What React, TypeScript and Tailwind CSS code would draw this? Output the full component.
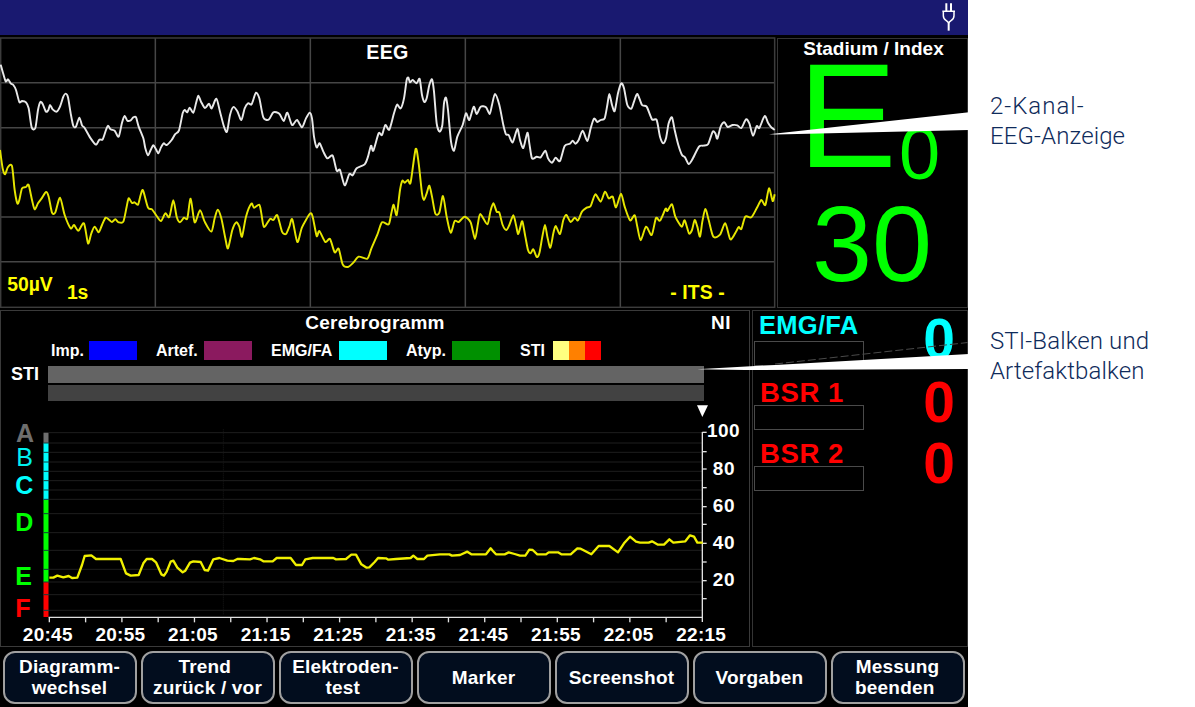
const parse = (dx: number, dy: number, s: string) =>
  s
    .trim()
    .split(/\s+/)
    .map((p) => {
      const [x, y] = p.split(',').map(Number);
      return `${x + dx},${y + dy}`;
    })
    .join(' ');

/* Turns a point list into a smooth curve that passes through every sample. */
const smooth = (list: string) => {
  const p = list.split(' ').map((q) => q.split(',').map(Number));
  const k = 0.13;
  let d = `M${p[0][0]} ${p[0][1]}`;
  for (let i = 0; i < p.length - 1; i++) {
    const a = p[Math.max(0, i - 1)];
    const b = p[i];
    const c = p[i + 1];
    const e = p[Math.min(p.length - 1, i + 2)];
    d += `C${b[0] + (c[0] - a[0]) * k} ${b[1] + (c[1] - a[1]) * k} ${c[0] - (e[0] - b[0]) * k} ${c[1] - (e[1] - b[1]) * k} ${c[0]} ${c[1]}`;
  }
  return d;
};

const channelOne = smooth([
  parse(0, 0, '2,104 8,125 17,154 24,148 32,160 40,165 48,180 58,216 66,213 78,217 86,235 95,292 106,294 114,240 121,216 128,222 138,245 145,240 150,225 158,238 170,245 180,230 190,200 197,191 204,202 212,250 220,288 228,290 238,263 246,286 254,294 272,325 288,344 298,329 308,328 318,300 324,287 332,298 344,302 356,320 366,278 374,258 382,272 392,271 400,262 408,262 416,290 430,325 436,355 444,376 452,360 460,346 468,358 475,370 483,352 491,340 500,345 515,330 525,313 537,301 548,250 554,240 562,247 569,233 580,248 588,220 595,197 603,215 615,234 627,221 635,235 649,206 660,245 672,290 681,305 690,255 700,231 712,244 724,270 734,235 744,220'),
  parse(750, 0, '4,224 8,215 18,188 28,205 40,262 56,269 70,247 88,251 101,273 112,248 126,285 141,270 156,292 168,265 179,248 186,265 192,320 200,352 209,340 220,365 232,385 248,377 260,422 270,420 284,466 298,432 308,436 320,415 344,403 354,380 363,347 370,362 386,310 396,315 406,285 418,299 432,250 441,224 452,235 462,205 470,150 475,143 480,157 488,150 500,160 509,147 516,195 523,216 530,205 538,165 546,148 552,185 560,280 569,305 577,285 582,220 588,203 594,240 603,335 612,362 622,320 638,285 648,250 658,270 671,230 680,252 692,230 708,232 719,252 726,225 735,192 748,225 760,285 768,313 776,315'),
  parse(1530, 0, '8,337 22,297 30,330 40,354 52,308 58,340 66,385 80,380 92,382 106,362 114,385 126,398 137,383 150,393 164,348 180,341 188,332 196,341 206,330 218,302 232,333 242,295 252,266 262,276 272,270 284,265 292,225 298,192 306,225 314,243 324,190 334,160 342,175 352,225 364,236 372,215 382,192 396,225 410,230 426,268 440,270 450,320 460,340 468,325 476,280 486,262 494,300 505,345 516,375 525,382 536,402 546,390 567,350 580,347 594,343 608,305 616,310 622,326 632,290 643,277 653,291 668,285 682,286 694,294 708,268 718,280 729,317 740,288 748,294 764,258 774,278 784,292 794,300'),
].join(' '));

const channelTwo = smooth([
  parse(0, 0, '0,360 8,415 15,433 24,411 36,408 44,480 52,520 58,510 66,475 78,471 86,465 96,510 104,538 114,520 125,505 138,486 146,500 156,548 166,547 180,503 194,555 212,595 222,585 235,602 252,580 264,640 274,610 284,590 296,607 306,585 317,563 328,570 336,576 346,568 356,577 370,575 380,530 386,505 396,519 404,517 414,524 422,495 429,481 444,533 456,538 470,558 483,573 496,550 508,561 520,511 530,560 540,577 552,563 562,565 572,506 584,577 600,541 614,575 634,605 644,565 653,539 664,565 676,625 684,655 697,600 709,577 718,590 726,620 738,560'),
  parse(750, 0, '4,521 12,533 28,524 34,550 42,591 60,567 70,570 82,556 96,605 108,612 118,590 127,568 142,636 156,592 180,551 188,560 200,618 208,603 226,636 240,627 254,667 266,656 278,703 294,711 310,698 326,680 352,686 364,656 382,614 396,577 416,583 424,550 431,524 440,555 450,480 457,452 464,458 474,450 482,457 497,357 506,400 516,490 522,510 530,490 538,467 546,500 556,551 568,548 579,498 590,560 602,608 614,573 626,576 644,560 662,577 675,627 684,580 691,552 712,583 721,545 730,520 740,545 748,548 758,585 769,600 778,585 790,556 798,585'),
  parse(1530, 0, '24,612 30,595 37,574 46,620 54,660 62,670 70,658 80,681 88,670 97,620 105,585 112,620 121,653 130,610 137,588 150,612 160,570 169,555 182,576 194,563 204,571 216,545 230,533 242,528 256,493 272,515 285,485 296,505 308,500 318,532 333,491 344,530 360,571 374,556 382,590 392,631 408,590 425,615 438,564 450,572 467,536 472,543 486,523 496,560 515,590 524,571 537,610 546,600 554,570 562,590 570,620 577,575 586,537 596,570 610,620 630,614 646,580 661,628 678,605 686,591 694,597 706,560 724,562 740,535 754,510 766,525 777,475 788,513 794,493'),
].join(' '));

const trend = [
  parse(0, 0, '148,473 160,473 172,467 190,472 206,468 216,474 232,473 246,435 254,408 274,406 288,417 362,417 378,460 392,467 416,465 430,430 440,417 456,417 468,427 484,463 492,467 500,455 512,425 520,422 532,443 548,457 556,452 570,428 580,424 602,426 614,450 624,452 640,418 658,414 682,422 700,423 712,417'),
  parse(720, 270, '0,147 30,148 42,144 60,148 70,154 98,154 110,144 152,144 168,165 186,165 196,148 218,144 280,144 288,148 318,147 334,134 348,134 364,163 380,173 388,172 404,156 414,144 438,145 445,149 468,147 512,144 520,137 532,147 552,147 562,137 600,133 628,133 636,137 660,135 682,125 694,133 738,133 752,115'),
  parse(1470, -60, '8,452 18,463 44,463 56,457 74,462 90,467 106,467 118,449 128,450 142,463 168,463 176,457 204,457 214,463 242,463 262,445 272,446 304,463 326,438 358,438 384,457 402,430 420,410 438,425 450,428 476,428 486,424 504,434 522,434 538,418 550,428 586,424 600,406 612,410 622,428 638,428'),
].join(' ');

const levelLines = [38, 69, 97, 126, 154, 182, 210, 238, 281, 338, 391, 448, 486, 524, 571];
const indexTicks = [37, 95, 147, 203, 260, 313, 370, 426, 482, 536];
const times = ['20:45', '20:55', '21:05', '21:15', '21:25', '21:35', '21:45', '21:55', '22:05', '22:15'];

const stages = [
  { name: 'A', x: 48, y: 67, color: '#6e6e6e', weight: 700 },
  { name: 'B', x: 49, y: 139, color: '#00f0f0', weight: 400 },
  { name: 'C', x: 46, y: 221, color: '#00ffff', weight: 700 },
  { name: 'D', x: 46, y: 332, color: '#00ff00', weight: 700 },
  { name: 'E', x: 46, y: 494, color: '#00ff00', weight: 700 },
  { name: 'F', x: 46, y: 590, color: '#ff0000', weight: 700 },
];

const legend = [
  { name: 'Imp.', width: 'w-[39px]', colors: ['bg-[#0000ff]'] },
  { name: 'Artef.', width: 'w-[49px]', colors: ['bg-[#8b1a5f]'] },
  { name: 'EMG/FA', width: 'w-[69px]', colors: ['bg-[#00ffff]'] },
  { name: 'Atyp.', width: 'w-[47px]', colors: ['bg-[#009000]'] },
  { name: 'STI', width: 'w-[34px]', colors: ['bg-[#ffff80]', 'bg-[#ff8000]', 'bg-[#ff0000]'] },
];
const legendGap = ['ml-0', 'ml-[18px]', 'ml-[18px]', 'ml-[18px]', 'ml-[19px]'];

const readings = [
  { name: 'EMG/FA', row: 'h-[63px] text-[#00ffff]', label: 'h-[30px] text-[25.5px] leading-[29px] pl-[5px] tracking-[0.3px]' },
  { name: 'BSR 1', row: 'h-[61px] pt-1 text-[#ff0000]', label: 'h-[27px] text-[27.5px] leading-[30px] pl-[6px] tracking-[0.6px]' },
  { name: 'BSR 2', row: 'h-[61px] pt-1 text-[#ff0000]', label: 'h-[27px] text-[27.5px] leading-[30px] pl-[6px] tracking-[0.6px]' },
];

const buttons = [
  ['Diagramm-', 'wechsel'],
  ['Trend ', 'zurück / vor'],
  ['Elektroden-', 'test '],
  ['Marker'],
  ['Screenshot'],
  ['Vorgaben'],
  ['Messung', 'beenden '],
];

function PlugIcon() {
  return (
    <svg className="h-[29px] w-4" viewBox="0 0 48 87" fill="none" stroke="#fff" strokeWidth="4.5">
      <path d="M16 1V24M30 1V24" strokeWidth="6" />
      <path d="M4 25H42M7 25V38Q7 47 15 52Q21 56 23 60Q25 56 31 52Q39 47 39 38V25" />
      <path d="M23 58V83" strokeWidth="6" />
    </svg>
  );
}

function EegPanel() {
  return (
    <section className="h-[271px] w-[776px]">
      <svg className="block h-[271px] w-[776px]" viewBox="0 21 2328 813">
        <g stroke="#464646" strokeWidth="4.5" fill="none">
          {[158, 293, 428, 561, 695].map((y) => (
            <path key={y} d={`M0 ${y}H2325`} />
          ))}
          {[466, 931, 1396, 1861].map((x) => (
            <path key={x} d={`M${x} 24V832`} />
          ))}
          <rect x="2" y="24" width="2322" height="808" stroke="#3c3c3c" />
        </g>
        <path d={channelOne} fill="none" stroke="#e8e8e8" strokeWidth="5.8" strokeLinejoin="round" />
        <path d={channelTwo} fill="none" stroke="#e6e600" strokeWidth="5.8" strokeLinejoin="round" />
        <g fontFamily="'Liberation Sans', sans-serif" fontWeight="700" fontSize="58">
          <text x="1099" y="87" fontSize="59" textLength="126" fill="#fff">EEG</text>
          <text x="22" y="782" textLength="136" fill="#ffff00">50µV</text>
          <text x="201" y="808" textLength="64" fill="#ffff00">1s</text>
          <text x="2011" y="807" textLength="163" fill="#ffff00">- ITS -</text>
        </g>
      </svg>
    </section>
  );
}

function StagePanel() {
  return (
    <section className="mt-px h-[270px] w-[191px] border border-[#343434] text-[#00ff00]">
      <h2 className="pl-[2px] text-center text-[19px] leading-[19px] font-bold text-white">Stadium / Index</h2>
      <div className="mt-[2px] flex h-[110px] pl-[20px]">
        <span className="w-[100px] pt-px text-[148px] leading-[110px]">E</span>
        <span className="mt-[64px] ml-px text-[74px] leading-[60px]">0</span>
      </div>
      <div className="mt-[34px] pl-[34px] text-[108px] leading-[80px]">30</div>
    </section>
  );
}

function TrendChart() {
  return (
    <svg className="block h-[243px] w-[748px]" viewBox="3 -51 2244 729">
      <g stroke="#1e1e1e" strokeWidth="3">
        {levelLines.map((y) => (
          <path key={y} d={`M146 ${y}H2106`} />
        ))}
        <path d="M670 28V585" strokeDasharray="3 3" stroke="#181818" />
      </g>
      <path d="M138 38V69" stroke="#6e6e6e" strokeWidth="15" />
      <path d="M138 69V240" stroke="#00ffff" strokeWidth="15" />
      <path d="M138 240V486" stroke="#00ff00" strokeWidth="15" />
      <path d="M138 486V591" stroke="#ff0000" strokeWidth="15" />
      {levelLines.slice(1).map((y) => (
        <path key={y} d={`M130 ${y}H147`} stroke="#143c3c" strokeWidth="3" />
      ))}
      <g stroke="#e0e0e0" strokeWidth="4" fill="none">
        <path d="M146 592H2107M2107 36V606" />
        {indexTicks.map((y) => (
          <path key={y} d={`M2107 ${y}H2120`} />
        ))}
        {Array.from({ length: 18 }, (_, i) => (
          <path key={i} d={`M${148 + i * 108.85} 592V607`} />
        ))}
      </g>
      <path d="M2091 -44H2124L2107 -9Z" fill="#fff" />
      <polyline points={trend} fill="none" stroke="#f0f000" strokeWidth="7" strokeLinejoin="round" />
      <g fontFamily="'Liberation Sans', sans-serif" fontWeight="700" fontSize="57" fill="#fff">
        {times.map((t, i) => (
          <text key={t} x={143 + i * 217.8} y="663" textAnchor="middle" textLength="149">
            {t}
          </text>
        ))}
        {[100, 80, 60, 40, 20].map((v, i) => (
          <text key={v} x={v === 100 ? 2121 : 2138} y={52 + i * 111.5} textLength={v === 100 ? 98 : 66}>
            {v}
          </text>
        ))}
      </g>
      <g fontFamily="'Liberation Sans', sans-serif" fontSize="75">
        {stages.map((s) => (
          <text key={s.name} x={s.x} y={s.y} fill={s.color} fontWeight={s.weight}>
            {s.name}
          </text>
        ))}
      </g>
    </svg>
  );
}

function CerebrogramPanel() {
  return (
    <section className="flex h-[337px] w-[750px] flex-col border border-[#3a3a3a]">
      <div className="relative h-[30px] text-[19px] leading-[23px] font-bold">
        <h2 className="text-center tracking-[0.28px]">Cerebrogramm</h2>
        <span className="absolute top-0 right-[18px] tracking-[0.5px]">NI</span>
      </div>
      <div className="flex h-[19px] pl-[49.4px] text-[16px] leading-[20px] font-bold">
        {legend.map((item, i) => (
          <div key={item.name} className={`flex ${legendGap[i]}`}>
            <span className={`pl-[0.6px] ${item.width}`}>{item.name}</span>
            <span className="flex h-[19px] w-12">
              {item.colors.map((c) => (
                <span key={c} className={`flex-1 ${c}`} />
              ))}
            </span>
          </div>
        ))}
      </div>
      <div className="mt-[6px] flex h-[37px]">
        <span className="w-[47px] pl-[10px] text-[18px] leading-[17px] font-bold">STI</span>
        <div className="flex flex-col gap-[2px]">
          <div className="h-[17px] w-[656px] bg-[#646464]" />
          <div className="h-[16px] w-[656px] bg-[#424242]" />
        </div>
      </div>
      <TrendChart />
    </section>
  );
}

function ReadingsPanel() {
  return (
    <section className="h-[337px] w-[216px] border border-[#343434]">
      {readings.map((r) => (
        <div key={r.name} className={`flex justify-between pr-[12px] font-bold ${r.row}`}>
          <div className="pl-px">
            <div className={r.label}>{r.name}</div>
            <div className="h-[25px] w-[110px] border border-[#4a4a4a]" />
          </div>
          <div className={`text-[57px] leading-[56px] ${r.name === 'EMG/FA' ? '' : '-mt-1'}`}>0</div>
        </div>
      ))}
    </section>
  );
}

export default function App() {
  return (
    <main className="relative flex h-[707px] w-[1195px] overflow-hidden bg-white font-['Liberation_Sans',sans-serif]">
      <div className="flex h-[707px] w-[968px] flex-col bg-black text-white">
        <header className="flex h-[35px] justify-end bg-[#191970] pt-[3px] pr-[11px]">
          <PlugIcon />
        </header>
        <div className="mt-[2px] flex h-[271px] gap-px">
          <EegPanel />
          <StagePanel />
        </div>
        <div className="mt-[2px] flex h-[337px] gap-[2px]">
          <CerebrogramPanel />
          <ReadingsPanel />
        </div>
        <nav className="mt-1 flex gap-1 pl-[3px]">
          {buttons.map((lines) => (
            <button
              key={lines[0]}
              className="flex h-[53px] w-[134px] flex-col items-center justify-center rounded-[12px] border-2 border-[#a0a0a0] bg-[#020d1e] pr-px pb-px text-[19px] leading-[21px] font-bold tracking-[0.2px] whitespace-pre"
            >
              {lines.map((l) => (
                <span key={l}>{l}</span>
              ))}
            </button>
          ))}
        </nav>
      </div>
      <aside className="flex flex-col pt-[91px] pl-[22px] font-['Roboto',sans-serif] text-[24px] leading-[30px] font-light tracking-[0.12px] text-[#0f2b5b]">
        <p>
          <span className="tracking-[1px]">2-Kanal-</span>
          <br />
          EEG-Anzeige
        </p>
        <p className="mt-[175px]">
          STI-Balken und
          <br />
          Artefaktbalken
        </p>
      </aside>
      <svg className="absolute top-0 left-0 h-[707px] w-[1195px]" viewBox="0 0 1195 707">
        <path d="M769 134.3L969 112.3V130L776 134.4Z" fill="#fff" />
        <path d="M697 369.3L969 354V369L745 370Z" fill="#fff" />
        <path d="M775 364L968 342.5" stroke="#4a4a4a" strokeWidth="1" strokeDasharray="8 3" />
      </svg>
    </main>
  );
}
